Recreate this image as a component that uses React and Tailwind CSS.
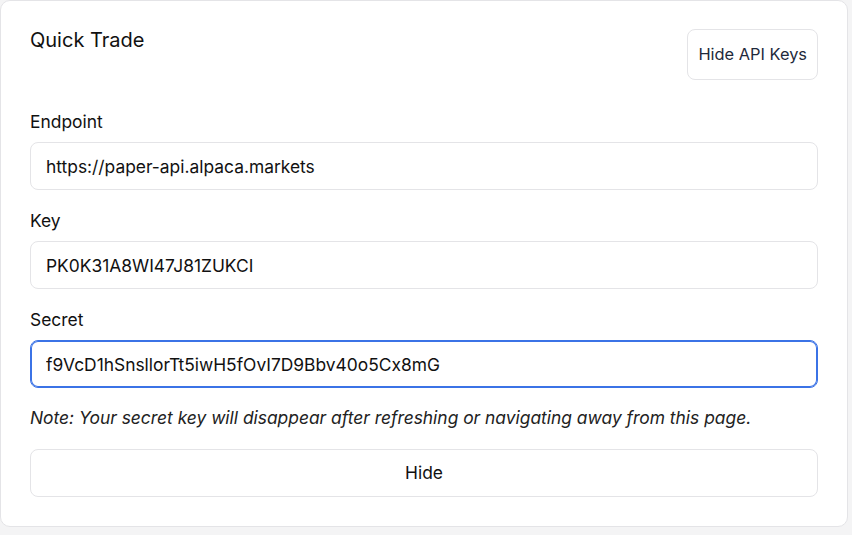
import React from 'react'

const Field = ({ label, value, focused }) => {
  return (
    <div className="flex flex-col">
      <label className="text-[17.4px] leading-6 text-[#111111] mb-2">{label}</label>
      <input
        readOnly
        value={value}
        className={
          focused
            ? 'h-12 w-full rounded-lg border border-[#3b73e6] shadow-[inset_0_0_0_1px_#3b73e6] bg-white px-[15px] text-[17.4px] text-[#111111] outline-none'
            : 'h-12 w-full rounded-lg border border-[#e4e4e7] bg-white px-[15px] text-[17.4px] text-[#111111] outline-none'
        }
      />
    </div>
  )
}

const App = () => {
  return (
    <div className="min-h-[535px] w-[852px] bg-[#f4f4f5]" style={{ fontFamily: 'Inter, "Noto Sans", sans-serif' }}>
      <div className="w-[848px] h-[527px] bg-white border border-[#e4e4e7] rounded-[10px] px-[29px] pt-[28px] pb-[30px]">
        <div className="flex items-start justify-between">
          <h2 className="text-xl leading-6 text-[#111111] -mt-px">Quick Trade</h2>
          <button className="h-[51px] px-[10px] rounded-lg border border-[#e4e4e7] bg-white text-[16.4px] text-[#1e293b]">
            Hide API Keys
          </button>
        </div>
        <div className="mt-[30px] flex flex-col gap-[19px]">
          <Field label="Endpoint" value="https://paper-api.alpaca.markets" />
          <Field label="Key" value="PK0K31A8WI47J81ZUKCI" />
          <Field label="Secret" value="f9VcD1hSnsllorTt5iwH5fOvI7D9Bbv40o5Cx8mG" focused />
        </div>
        <p className="mt-[18px] text-[17.4px] leading-6 italic text-[#222222]">
          Note: Your secret key will disappear after refreshing or navigating away from this page.
        </p>
        <button className="mt-[19px] h-12 w-full rounded-lg border border-[#e4e4e7] bg-white text-[17.4px] text-[#111111]">
          Hide
        </button>
      </div>
    </div>
  )
}

export default App
